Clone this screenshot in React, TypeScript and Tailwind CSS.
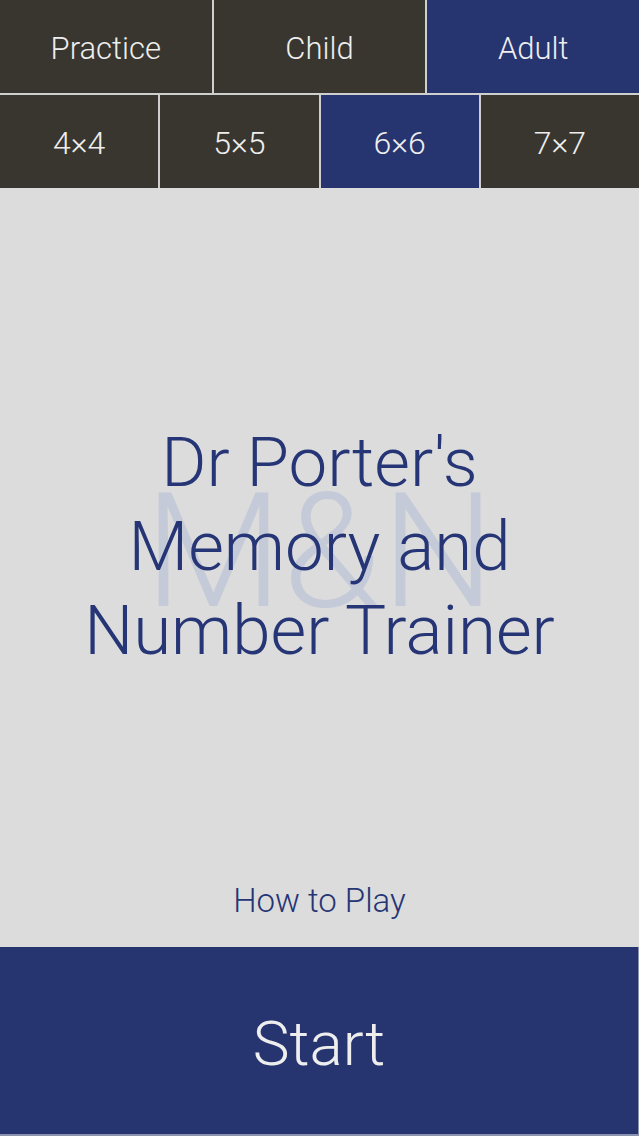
import React, { useState } from "react";

const levels = ["Practice", "Child", "Adult"];
const sizes = ["4×4", "5×5", "6×6", "7×7"];

export default function App() {
  const [level, setLevel] = useState("Adult");
  const [size, setSize] = useState("6×6");

  return (
    <div
      className="flex h-[1136px] w-[639px] flex-col overflow-hidden bg-[#dcdcdc] font-light"
      style={{ fontFamily: "Roboto, 'Liberation Sans', sans-serif" }}
    >
      {/* Difficulty selector */}
      <div className="grid grid-cols-3 gap-[2px] bg-[#cfcfcf] pb-[2px]">
        {levels.map((l) => (
          <button
            key={l}
            onClick={() => setLevel(l)}
            className={`h-[93px] pt-[6px] text-[31px] text-[#eeeeee] ${
              level === l ? "bg-[#263470]" : "bg-[#38362f]"
            }`}
          >
            {l}
          </button>
        ))}
      </div>

      {/* Grid size selector */}
      <div className="grid grid-cols-4 gap-[2px] bg-[#cfcfcf]">
        {sizes.map((s) => (
          <button
            key={s}
            onClick={() => setSize(s)}
            className={`h-[93px] pt-[2px] text-[32px] text-[#eeeeee] ${
              size === s ? "bg-[#263470]" : "bg-[#38362f]"
            }`}
          >
            {s}
          </button>
        ))}
      </div>

      {/* Title with faded monogram behind */}
      <div className="flex flex-1 flex-col items-center">
        <div className="relative mt-[233px] flex flex-col items-center">
          <span
            aria-hidden="true"
            className="pointer-events-none absolute top-[51px] select-none text-[160px] leading-none text-[#c5cad8]"
          >
            M&amp;N
          </span>
          <h1 className="relative text-center text-[69px] leading-[84px] text-[#253575]">
            Dr Porter's
            <br />
            Memory and
            <br />
            Number Trainer
          </h1>
        </div>
        <button className="mt-auto mb-[22px] text-[33px] text-[#253575]">How to Play</button>
      </div>

      <button className="h-[189px] w-full border-b-[2px] border-r-[1px] border-[#8a92b0] bg-[#263470] pt-[5px] text-[62px] text-[#eeeeee]">
        Start
      </button>
    </div>
  );
}
